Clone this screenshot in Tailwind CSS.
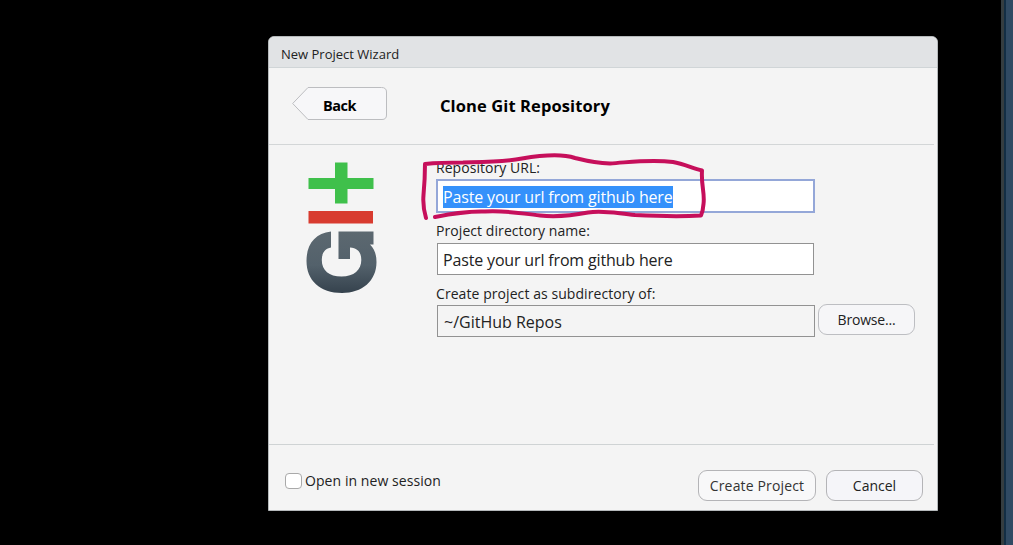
<!DOCTYPE html>
<html lang="en">
<head>
<meta charset="utf-8">
<title>New Project Wizard</title>
<script src="https://cdn.jsdelivr.net/npm/@tailwindcss/browser@4"></script>
</head>
<body class="flex h-[545px] w-[1013px] overflow-hidden bg-black font-['Open_Sans','Noto_Sans',sans-serif] text-[#222]">
<main class="flex-1 pt-9 pl-[268px]">
  <section class="relative flex h-[475px] w-[670px] flex-col overflow-hidden rounded-t-md border border-[#b5b9bb] bg-[#f4f4f4]">
    <header class="flex h-[31px] shrink-0 items-center border-b border-[#d0d5d7] bg-[#e1e3e5] pt-1.5 pl-3 text-[13px] whitespace-nowrap"><span>New Project Wizard</span></header>
    <div class="mr-[3px] flex h-[77px] shrink-0 items-start border-b border-[#d3d6d7] pt-[19px] pl-[23px] font-bold text-black">
      <div class="relative h-[33px] w-[96px]">
        <svg class="absolute inset-0" width="96" height="33" viewBox="0 0 96 33"><path d="M16 .5H89.500Q94.500 .5 94.500 5V28Q94.500 32.500 90 32.500H16L.7 16.500Z" fill="#f7f7f9" stroke="#bcbdc0"/></svg>
        <span class="absolute top-[9px] left-[31px] text-[14.500px] leading-5 tracking-[-0.5px]">Back</span>
      </div>
      <h1 class="mt-[7px] ml-[52px] text-[16.500px] leading-6 tracking-[0.1px] whitespace-nowrap"><span>Clone Git Repository</span></h1>
    </div>
    <div class="mr-[3px] flex h-[300px] shrink-0 border-b border-[#cfd3d4]">
      <svg class="mt-[15px] ml-[35px] shrink-0" width="75" height="137" viewBox="304 160 75 137">
        <defs><linearGradient id="slate" x1="0" y1="0" x2="0" y2="1"><stop offset="0" stop-color="#5c6870"/><stop offset=".55" stop-color="#53616b"/><stop offset="1" stop-color="#35424d"/></linearGradient></defs>
        <path d="M335 162.500H347.500V178H373.500V189H347.500V203.500H335V189H308.500V178H335Z" fill="#3fc04b"/>
        <path d="M308.500 211H373V223.500H308.500Z" fill="#d83b2f"/>
        <path d="M331 231.500V247.500C325 248.500 321.800 253 321.800 260C321.800 270.500 329 276.500 341.500 276.500C354 276.500 361.300 270 361.300 260C361.300 252 357.500 248 350 247.500V259H338.500V231.500H373.500V244.500H370C374.500 249 376.500 254.500 376.500 262C376.500 281 362 293 342 293C320 293 306.500 280.500 306.500 261C306.500 244 315 233.500 331 231.500Z" fill="url(#slate)"/>
      </svg>
      <div class="ml-[57px] flex flex-col whitespace-nowrap">
        <label class="mt-3 h-[22px] text-sm leading-[22px] tracking-[0.05px]"><span>Repository URL:</span></label>
        <div class="flex h-[34px] w-[379px] items-center border-2 border-[#94a7d8] bg-white px-[5px] text-base tracking-[-0.16px] text-white"><span class="mt-px bg-[#3491fb] leading-[22px]">Paste your url from github here</span></div>
        <label class="mt-[7px] h-[23px] text-sm leading-[22px] tracking-[0.07px]"><span>Project directory name:</span></label>
        <div class="ml-px flex h-[32px] w-[377px] items-center border border-[#929292] bg-white px-[5px] pt-px text-base tracking-[-0.16px]"><span>Paste your url from github here</span></div>
        <label class="mt-[8px] h-[22px] text-sm leading-[22px] tracking-[0.07px]"><span>Create project as subdirectory of:</span></label>
        <div class="flex">
          <div class="ml-px flex h-[32px] w-[378px] items-center border border-[#929292] px-1.5 pt-px text-base"><span>~/GitHub Repos</span></div>
          <button class="-mt-px ml-[3px] h-[31px] w-[97px] rounded-[9px] border border-[#bdbec2] bg-[#f6f6f8] text-[14px] tracking-[-0.2px]"><span>Browse...</span></button>
        </div>
      </div>
    </div>
    <footer class="flex flex-1 pl-4 whitespace-nowrap">
      <div class="mt-[28px] h-4 w-[17px] rounded-[4px] border border-[#a9a9a9] bg-white"></div>
      <label class="mt-[25px] ml-[3px] text-[14px] leading-[22px] tracking-[0.07px]"><span>Open in new session</span></label>
      <div class="mt-[25px] mr-[14px] ml-auto flex gap-[10px] text-[14px]">
        <button class="h-[31px] w-[118px] rounded-[9px] border border-[#b4b4b7] bg-[#f8f8f9] tracking-[0.15px] text-[#333]"><span>Create Project</span></button>
        <button class="h-[31px] w-[97px] rounded-[9px] border border-[#b4b4b7] bg-[#f5f5f9]"><span>Cancel</span></button>
      </div>
    </footer>
    <svg class="pointer-events-none absolute -top-px -left-px" width="670" height="475" viewBox="268 36 670 475" fill="none" stroke="#c60f5b" stroke-width="4" stroke-linecap="round" stroke-linejoin="round">
      <path d="M426 218C423 208 423 201 423.500 195C424.500 184 425 175 425 164Q440 162.500 463 162.500C482 162 505 162 522 158.500C543 155 563 154 575 158C587 161 594 163 610 163.500C632 162 651 159 673 162C684 164 692 168 702 170.500C701 186 705 193 703.500 204Q703 211 701 215.500Q675 217 635 215C614 213 603 210 588 212.500C570 216 555 217 540 215.500C517 213 503 210 485 211.500C465 211 450 214 435 217"/>
    </svg>
  </section>
</main>
<aside class="w-3 border-l-[3px] border-[#353d40] bg-[#304a63]"><div class="h-full w-[2px] bg-[#132e44]"></div></aside>
</body>
</html>
